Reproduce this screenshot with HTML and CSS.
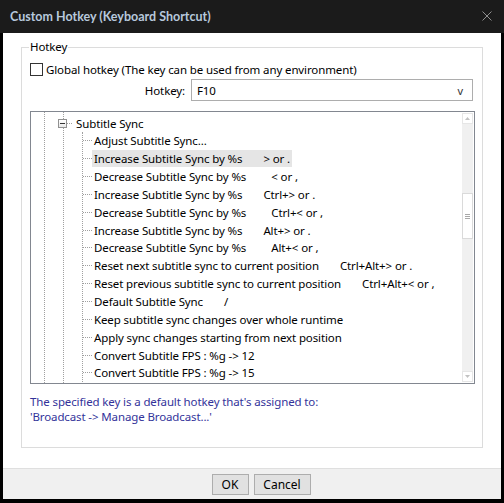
FILE: index.html
```html
<!DOCTYPE html>
<html lang="en">
<head>
    <meta charset="UTF-8">
    <title>Custom Hotkey (Keyboard Shortcut)</title>
    <link rel="stylesheet" href="styles.css">
</head>
<body>
    <!-- Title bar -->
    <div class="titlebar">
        <span class="title">Custom Hotkey (Keyboard Shortcut)</span>
        <svg class="close" width="10" height="10" viewBox="0 0 10 10">
            <path d="M0.5 0.5 L9.5 9.5 M9.5 0.5 L0.5 9.5" stroke="#8f8f8f" stroke-width="1" fill="none"/>
        </svg>
    </div>

    <div class="dialog">
        <fieldset class="group">
            <legend>Hotkey</legend>

            <label class="check-row">
                <span class="checkbox"></span>
                Global hotkey (The key can be used from any environment)
            </label>

            <div class="hotkey-row">
                <span class="hotkey-label">Hotkey:</span>
                <div class="combo">
                    <span>F10</span>
                    <span class="combo-arrow">v</span>
                </div>
            </div>

            <!-- Command tree -->
            <div class="listbox">
                <div class="tree">
                    <div class="guide">
                        <div class="guide">
                            <div class="node">
                                <span class="expander"></span>
                                <span class="dash short"></span>
                                <span class="label">Subtitle Sync</span>
                            </div>
                            <ul class="children">
                                <li><span class="label">Adjust Subtitle Sync...</span></li>
                                <li><span class="label hover">Increase Subtitle Sync by %s<span class="key">&gt; or .</span></span></li>
                                <li><span class="label">Decrease Subtitle Sync by %s<span class="key lt">&lt; or ,</span></span></li>
                                <li><span class="label">Increase Subtitle Sync by %s<span class="key">Ctrl+&gt; or .</span></span></li>
                                <li><span class="label">Decrease Subtitle Sync by %s<span class="key lt">Ctrl+&lt; or ,</span></span></li>
                                <li><span class="label">Increase Subtitle Sync by %s<span class="key">Alt+&gt; or .</span></span></li>
                                <li><span class="label">Decrease Subtitle Sync by %s<span class="key lt">Alt+&lt; or ,</span></span></li>
                                <li><span class="label">Reset next subtitle sync to current position<span class="key">Ctrl+Alt+&gt; or .</span></span></li>
                                <li><span class="label">Reset previous subtitle sync to current position<span class="key">Ctrl+Alt+&lt; or ,</span></span></li>
                                <li><span class="label">Default Subtitle Sync<span class="key">/</span></span></li>
                                <li><span class="label">Keep subtitle sync changes over whole runtime</span></li>
                                <li><span class="label">Apply sync changes starting from next position</span></li>
                                <li><span class="label">Convert Subtitle FPS : %g -&gt; 12</span></li>
                                <li><span class="label">Convert Subtitle FPS : %g -&gt; 15</span></li>
                            </ul>
                        </div>
                    </div>
                </div>

                <div class="vscroll">
                    <div class="sb-btn">
                        <svg width="5" height="3" viewBox="0 0 5 3"><path d="M2.5 0 L5 3 L0 3 Z" fill="#c2c2c2"/></svg>
                    </div>
                    <div class="sb-track">
                        <div class="sb-thumb">
                            <span></span><span></span><span></span>
                        </div>
                    </div>
                    <div class="sb-btn">
                        <svg width="5" height="3" viewBox="0 0 5 3"><path d="M0 0 L5 0 L2.5 3 Z" fill="#c2c2c2"/></svg>
                    </div>
                </div>
            </div>

            <p class="note">The specified key is a default hotkey that's assigned to:<br>'Broadcast -&gt; Manage Broadcast...'</p>
        </fieldset>

        <div class="buttons">
            <button class="btn ok">OK</button>
            <button class="btn cancel">Cancel</button>
        </div>
    </div>
</body>
</html>
```

FILE: styles.css
```css
/* Dialog styles */
* {
    box-sizing: border-box;
}

body {
    margin: 0;
    background-color: #000;
    font-family: "Noto Sans", "Open Sans", sans-serif;
    font-size: 11.5px;
    letter-spacing: -0.12px;
    color: #000;
    height: 503px;
    overflow: hidden;
}

.titlebar {
    height: 33px;
    background-color: #1b1b1b;
    display: flex;
    align-items: center;
    justify-content: space-between;
    padding: 0 12px 1px 10px;
}

.title {
    color: #b7c8dc;
    font-family: Lato, "Noto Sans", sans-serif;
    font-size: 12.5px;
    font-weight: bold;
    letter-spacing: 0;
}

.dialog {
    background: #fff;
    margin: 0 3px;
    height: 466px;
    display: flex;
    flex-direction: column;
}

.group {
    margin: 6px 18px 0;
    padding: 6px 7px 23px 8px;
    border: 1px solid #dcdcdc;
    min-width: 0;
}

.group legend {
    padding: 0 1px;
    margin-left: -1px;
    line-height: 16px;
}

.check-row {
    display: flex;
    align-items: center;
    height: 17px;
    gap: 3px;
}

.checkbox {
    width: 13px;
    height: 13px;
    border: 1px solid #333;
    background: #fff;
}

.hotkey-row {
    display: flex;
    justify-content: flex-end;
    align-items: center;
    margin-top: 1px;
    padding-right: 2px;
    gap: 6px;
}

.combo {
    width: 282px;
    height: 22px;
    border: 1px solid #adadad;
    display: flex;
    align-items: center;
    justify-content: space-between;
    padding: 0 9px 0 5px;
}

.combo-arrow {
    color: #333;
    font-size: 11px;
}

/* Tree list */
.listbox {
    margin-top: 10px;
    height: 273px;
    border: 1px solid #828790;
    display: flex;
}

.tree {
    flex: 1;
    overflow: hidden;
    padding: 0 0 0 13px;
}

.guide {
    border-left: 1px dotted #a0a0a0;
    padding-left: 18px;
    min-height: 271px;
}

.guide .guide {
    padding-top: 2px;
}

.node {
    height: 18px;
    display: flex;
    align-items: center;
}

.expander {
    width: 9px;
    height: 9px;
    margin-left: -24px;
    border: 1px solid #919191;
    background: linear-gradient(#fff, #e8e8e8);
    position: relative;
}

.expander::after {
    content: "";
    position: absolute;
    left: 1px;
    top: 3px;
    width: 5px;
    height: 1px;
    background: #333;
}

.dash {
    width: 9px;
    border-top: 1px dotted #a0a0a0;
}

.dash.short {
    width: 5px;
    margin-right: 2px;
}

.label {
    white-space: nowrap;
    padding: 0 2px;
    line-height: 17px;
}

.label.hover {
    background-color: #e5e5e5;
}

.key {
    margin-left: 21px;
}

.key.lt {
    margin-left: 25px;
}

.children {
    list-style: none;
    margin: 0;
    padding: 0;
    border-left: 1px dotted #a0a0a0;
}

.children li {
    height: 17.85px;
    display: flex;
    align-items: center;
}

.children li::before {
    content: "";
    width: 9px;
    border-top: 1px dotted #a0a0a0;
}

/* Scrollbar */
.vscroll {
    width: 11px;
    margin: 1px 1px 1px 0;
    background: #f0f0f0;
    display: flex;
    flex-direction: column;
}

.sb-btn {
    height: 11px;
    background: #fff;
    border: 1px solid #e6e6e6;
    display: flex;
    align-items: center;
    justify-content: center;
}

.sb-track {
    flex: 1;
}

.sb-thumb {
    margin-top: 69px;
    height: 46px;
    background: #fff;
    border: 1px solid #dadada;
    display: flex;
    flex-direction: column;
    align-items: center;
    justify-content: center;
    gap: 1px;
}

.sb-thumb span {
    width: 5px;
    height: 1px;
    background: #a8a8a8;
}

.note {
    margin: 10px 0 0;
    line-height: 15px;
    color: #33339a;
}

/* Bottom buttons */
.buttons {
    margin-top: auto;
    height: 31px;
    border-top: 1px solid #dfdfdf;
    background: #f0f0f0;
    display: flex;
    justify-content: center;
    gap: 5px;
    padding: 5px 0 0 18px;
}

.btn {
    height: 21px;
    background: #e1e1e1;
    border: 1px solid #adadad;
    font-family: inherit;
    font-size: 12px;
    padding: 0;
}

.btn.ok {
    width: 37px;
}

.btn.cancel {
    width: 57px;
}
```
